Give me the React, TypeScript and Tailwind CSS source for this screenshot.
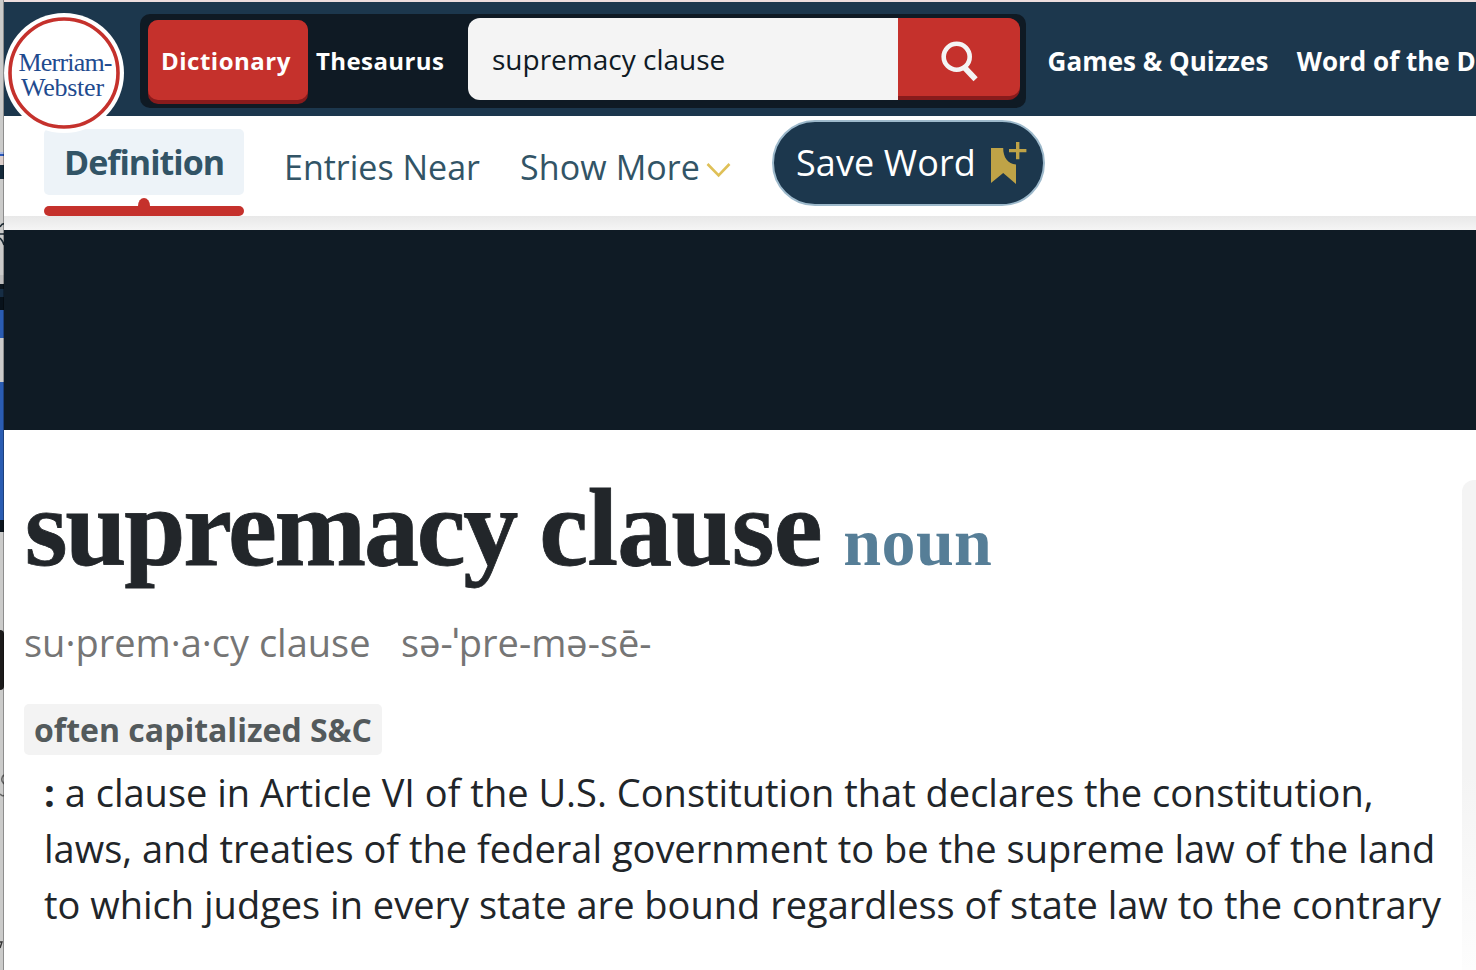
import React from "react";

function EdgeStrip() {
  return (
    <div className="relative flex h-[970px] w-1 shrink-0 flex-col overflow-hidden bg-[#cbcbca]">
      <div className="h-[152px] shrink-0" />
      <div className="h-[2px] shrink-0 bg-[#a9b9e2]" />
      <div className="h-[2px] shrink-0 bg-[#2b58ba]" />
      <div className="h-[9px] shrink-0 bg-[#ddcfcb]" />
      <div className="h-[14px] shrink-0 bg-[#152a3b]" />
      <div className="h-[96px] shrink-0" />
      <div className="h-[9px] shrink-0 bg-[#bdbdbd]" />
      <div className="h-[5px] shrink-0 bg-[#0b151e]" />
      <div className="h-[8px] shrink-0 bg-[#162d44]" />
      <div className="h-[13px] shrink-0 bg-[#08121b]" />
      <div className="h-[28px] shrink-0 bg-[#2a5cb2]" />
      <div className="h-[44px] shrink-0" />
      <div className="h-[138px] shrink-0 bg-[#2a5cb2]" />
      <div className="h-[12px] shrink-0 bg-[#0b151e]" />
      <div className="h-[98px] shrink-0" />
      <div className="h-[60px] shrink-0 rounded-tr-sm rounded-br-sm bg-[#1c1b1b]" />
      <svg className="absolute inset-0" width="4" height="970" viewBox="0 0 4 970" fill="none">
        <path d="M0 227 Q2 223 5 224 M0 234 H4 M0 238 Q3 241 4 245" stroke="#1c2a33" strokeWidth="1.6" />
        <path d="M4 775 Q1 777 2 781 L4 784 M0 794 Q3 797 4 795" stroke="#666" strokeWidth="1.6" />
        <path d="M0 942 H2 L0 948" stroke="#333" strokeWidth="1.4" />
        <path d="M3.5 0 V970" stroke="#000" strokeOpacity="0.3" />
      </svg>
    </div>
  );
}

function Logo() {
  return (
    <a className="absolute top-[13px] left-0 z-10 block size-[120px]" aria-label="Merriam-Webster">
      <svg className="absolute inset-0" width="120" height="120" viewBox="0 0 120 120">
        <circle cx="60" cy="60" r="60" fill="#fff" />
        <circle cx="60" cy="60" r="54" fill="none" stroke="#c5312c" strokeWidth="3.6" />
      </svg>
      <div className="relative pt-[37px] font-['Liberation_Serif',serif] text-[26px] leading-[25px] whitespace-nowrap text-[#1f4b8f]">
        <div className="pl-[14.5px] tracking-[-0.8px]">Merriam-</div>
        <div className="pl-[17px] tracking-[-0.25px]">Webster</div>
      </div>
    </a>
  );
}

function Header() {
  return (
    <header className="flex h-[114px] items-start bg-[#1c374d] pt-3 pl-[136px] whitespace-nowrap text-white">
      <div className="flex h-[94px] w-[886px] shrink-0 rounded-[10px] bg-[#0f1a24]">
        <button className="mt-[6px] ml-2 flex h-[84px] w-[160px] rounded-[10px] bg-[#881b1c] text-2xl font-bold tracking-[0.5px]">
          <span className="h-20 w-[160px] rounded-[10px] bg-[#c5312c] pl-[13px] text-left leading-[82px]">Dictionary</span>
        </button>
        <span className="ml-2 w-[152px] pt-[6px] text-2xl leading-[82px] font-bold tracking-[0.4px]">Thesaurus</span>
        <div className="mt-1 flex h-[82px] w-[552px] overflow-hidden rounded-[12px]">
          <div className="w-[430px] bg-[#f4f4f4] pl-6 text-[28px] leading-[82px] text-[#0f1a24]">
            supremacy clause
          </div>
          <button className="flex w-[122px] bg-[#881b1c]" aria-label="Search">
            <span className="block h-[78px] w-[122px] rounded-br-[10px] bg-[#c5312c]">
              <svg width="122" height="78" viewBox="0 0 122 78" fill="none" stroke="#f4f4f4">
                <circle cx="58.7" cy="38.7" r="13" strokeWidth="4.6" />
                <path d="M66 49 L77.6 61.2" strokeWidth="5.8" />
              </svg>
            </span>
          </button>
        </div>
      </div>
      <nav className="flex gap-[28.5px] pl-[21.6px] text-[26px] leading-[94px] font-bold">
        <a>Games &amp; Quizzes</a>
        <a>Word of the D</a>
      </nav>
    </header>
  );
}

function SubNav() {
  return (
    <nav className="flex h-[100px] items-start bg-white pl-10 text-[34px] whitespace-nowrap text-[#325466]">
      <div className="w-[200px] shrink-0 pt-[13px]">
        <div className="h-[66px] rounded-[5px] bg-[#edf3f8] pl-5 leading-[66px] font-bold tracking-[-1px]">Definition</div>
        <svg className="mt-[3px] block" width="200" height="18" viewBox="0 0 200 18" fill="#c5312c">
          <rect y="8" width="200" height="10" rx="5" />
          <ellipse cx="100" cy="8" rx="6" ry="8" />
        </svg>
      </div>
      <a className="ml-10 w-[236px] leading-[102px]">Entries Near</a>
      <a className="flex w-[252px] leading-[102px] tracking-[0.1px]">
        Show More
        <svg className="mt-[44px] ml-[6px]" width="26" height="18" viewBox="0 0 26 18" fill="none" stroke="#dfc057" strokeWidth="2.6">
          <path d="M1.5 4 L12.6 15.3 L23.5 4" />
        </svg>
      </a>
      <button className="mt-1 flex h-[86px] w-[273px] rounded-full border-2 border-[#9db9cb] bg-[#1c374d] pl-[22px] text-4xl leading-[82px] tracking-[0.1px] text-white">
        Save Word
        <svg className="mt-[18px] ml-[14px]" width="38" height="46" viewBox="0 0 38 46" fill="#bfa347">
          <path d="M1 8 H13.2 C13 17 18 24.4 26 24.4 V44 L13.2 33 L1 43 Z" />
          <path d="M26 2 h3.4 v7 h7 v3.2 h-7 v7 h-3.4 v-7 h-7 v-3.2 h7 z" />
        </svg>
      </button>
    </nav>
  );
}

function Entry() {
  return (
    <main className="w-[1458px] shrink-0 whitespace-nowrap">
      <h1 className="mt-[38px] flex h-[120px] items-baseline pl-[20.7px] font-['Liberation_Serif',serif] text-[110px] leading-[120px] font-bold text-[#22262a]">
        <span className="tracking-[-2.2px] [-webkit-text-stroke:0.8px_#22262a]">supremacy</span>
        <span className="ml-[23.2px] tracking-[-0.8px] [-webkit-text-stroke:0.8px_#22262a]">clause</span>
        <span className="ml-[21.5px] text-[68px] tracking-[0.4px] text-[#567e97]">noun</span>
      </h1>
      <div className="mt-7 flex h-[52px] pl-5 text-[38px] leading-[52px] text-[#757575]">
        <span>su·prem·a·cy clause</span>
        <span className="ml-[30.5px]">sə-ˈpre-mə-sē-</span>
      </div>
      <div className="mt-9 ml-5 h-[51px] w-[358px] rounded-[5px] bg-[#f3f3f3] pl-[10px] text-[32px] leading-[51px] font-bold text-[#535a5c]">
        often capitalized S&amp;C
      </div>
      <p className="mt-[9px] pl-10 text-[38px] leading-[56px] text-[#212529]">
        <b>:</b> a clause in Article VI of the U.S. Constitution that declares the constitution,
        <br />
        laws, and treaties of the federal government to be the supreme law of the land
        <br />
        to which judges in every state are bound regardless of state law to the contrary
      </p>
    </main>
  );
}

export default function App() {
  return (
    <div className="flex h-[970px] w-[1476px] overflow-hidden bg-white font-['Open_Sans','Noto_Sans',sans-serif]">
      <EdgeStrip />
      <div className="relative w-[1472px] shrink-0 overflow-hidden">
        <div className="h-[2px] bg-[#eddede]" />
        <Header />
        <Logo />
        <SubNav />
        <div className="h-[14px] bg-linear-to-b from-[#e8e8e8] to-[#f5f5f5]" />
        <div className="h-[200px] bg-[#0f1b25]" />
        <div className="flex h-[540px]">
          <Entry />
          <aside className="mt-[50px] h-[490px] w-[14px] shrink-0 rounded-tl-[12px] bg-linear-to-b from-[#f4f4f4] from-60% to-[#fdfdfd]" />
        </div>
      </div>
    </div>
  );
}
